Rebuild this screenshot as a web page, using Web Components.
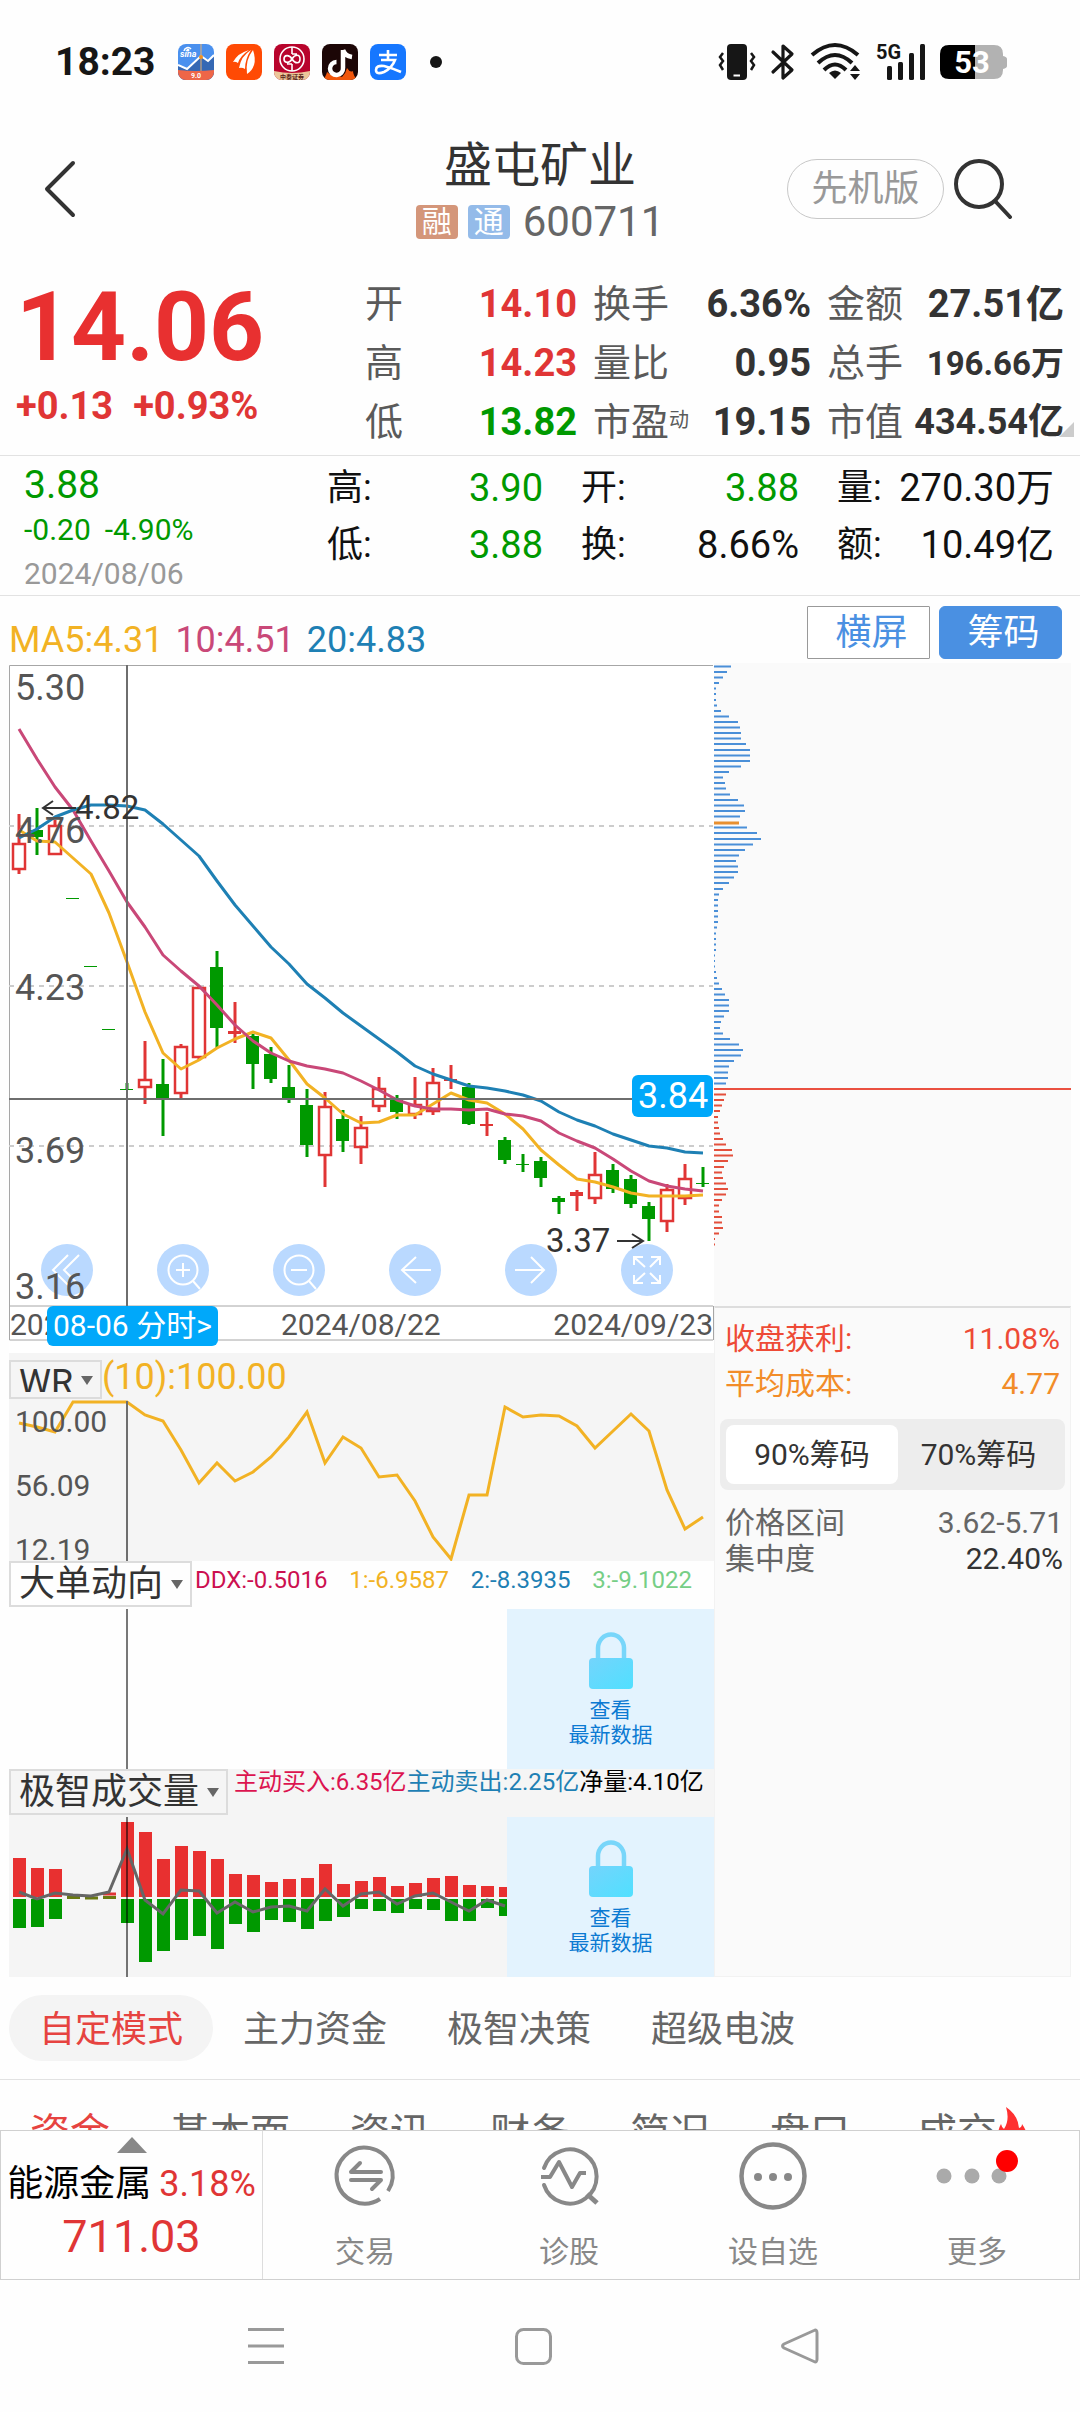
<!DOCTYPE html>
<html lang="zh-CN">
<head>
<meta charset="utf-8">
<meta name="viewport" content="width=device-width, initial-scale=1">
<title>盛屯矿业 600711</title>
<style>
  html, body { margin: 0; }
  body {
    background: #fefefe;
    color: #333;
    font-family: Roboto, "Noto Sans CJK SC", sans-serif;
    font-size: 36px;
    --red: #e03535;
    --green: #009900;
    --gray: #666;
    --rule: #e2e2e2;
  }
  .charts { display: grid; grid-template-columns: minmax(0, 705fr) minmax(0, 357fr); padding: 0 9px; }
</style>
</head>
<body>
<status-bar></status-bar>
<stock-header code="600711">盛屯矿业</stock-header>
<quote-board></quote-board>
<day-summary></day-summary>
<chart-toolbar></chart-toolbar>
<main class="charts">
  <div>
    <kline-chart></kline-chart>
    <wr-panel></wr-panel>
    <flow-panel name="大单动向" legend-line="39">
      <span slot="legend" style="color:#cc1050">DDX:-0.5016</span>
      <span slot="legend" style="color:#f2b224">1:-6.9587</span>
      <span slot="legend" style="color:#1e80b4">2:-8.3935</span>
      <span slot="legend" style="color:#76ce86">3:-9.1022</span>
    </flow-panel>
    <flow-panel name="极智成交量" legend-line="26" bars>
      <span slot="legend" style="color:#dc1450">主动买入:6.35亿</span>
      <span slot="legend" style="color:#1e80b4">主动卖出:2.25亿</span>
      <span slot="legend" style="color:#000">净量:4.10亿</span>
    </flow-panel>
  </div>
  <chip-panel></chip-panel>
</main>
<mode-tabs></mode-tabs>
<section-tabs></section-tabs>
<action-bar></action-bar>
<system-nav></system-nav>

<script>
const BASE = `
  :host { display: block; box-sizing: border-box; }
  * { box-sizing: border-box; }
  button, select { font: inherit; color: inherit; background: none; border: 0; margin: 0; padding: 0; white-space: nowrap; }
  a { color: inherit; text-decoration: none; white-space: nowrap; }
  svg { display: block; }
`;
class View extends HTMLElement {
  connectedCallback() {
    if (this.shadowRoot) return;
    this.attachShadow({ mode: 'open' }).innerHTML = `<style>${BASE}</style>` + this.render();
  }
}
const define = (name, render) => customElements.define(name, class extends View {
  render() { return render(this); }
});
const stepX = i => 19 + 18 * i;
const polyline = ys => ys.map((y, i) => `${stepX(i)},${y}`).join(' ');

/* ---------- status bar ---------- */
define('status-bar', () => `
<style>
  :host { display: flex; align-items: center; height: 124px; padding: 0 73px 0 55px; color: #161616; }
  .time { font-size: 39px; font-weight: 700; line-height: 48px; }
  .apps { display: flex; gap: 12px; margin-left: 22px; }
  .dot { width: 12px; height: 12px; border-radius: 50%; background: #161616; margin-left: 24px; }
  .sys { display: flex; align-items: center; margin-left: auto; gap: 15px; }
  .sys svg { overflow: visible; }
</style>
<span class="time">18:23</span>
<div class="apps">
  <svg width="36" height="36" viewBox="0 0 36 36"><clipPath id="c1"><rect width="36" height="36" rx="8"/></clipPath><g clip-path="url(#c1)">
    <rect width="36" height="36" fill="#4a90ee"/><path d="M0 22L8 25L22 12L30 17L36 13V36H0Z" fill="#3568b4"/><path d="M0 21L9 25L23 12L30 17L36 11" fill="none" stroke="#fff" stroke-width="2"/>
    <path d="M23 0V28" stroke="#e8b070" stroke-width="1"/><circle cx="23" cy="13" r="2" fill="#f09020"/>
    <path d="M0 26Q18 28 36 26V36H0Z" fill="#ee6648"/>
    <path d="M6 7a4 4 0 0 1 7-2" fill="none" stroke="#fff" stroke-width="1.5"/><circle cx="10" cy="6" r="1.5" fill="#fff"/>
    <text x="2" y="13" font-size="9" font-style="italic" font-weight="700" fill="#fff">sina</text>
    <text x="18" y="34" font-size="7" font-weight="700" fill="#fff" text-anchor="middle">9.0</text></g></svg>
  <svg width="36" height="36" viewBox="0 0 36 36"><rect width="36" height="36" rx="8" fill="#ff4a04"/>
    <path d="M7 18Q12 9 23 6Q14 12 12 19Q9 17 7 18Z" fill="#fff"/><path d="M13 24Q15 12 25 6Q19 15 19 25Q16 23 13 24Z" fill="#fff"/><path d="M21 30Q19 16 27 6Q30 15 28 21Q26 27 21 30Z" fill="#fff"/></svg>
  <svg width="36" height="36" viewBox="0 0 36 36"><clipPath id="c3"><rect width="36" height="36" rx="8"/></clipPath><g clip-path="url(#c3)">
    <rect width="36" height="36" fill="#b8042c"/><path d="M0 27Q18 31 36 27V36H0Z" fill="#ecc69a"/>
    <g fill="none" stroke="#fff" stroke-width="1.6"><circle cx="18" cy="15" r="12"/><path d="M18 3V10M18 20V27M18 15C15 10 10 11 10 15S15 20 18 15S26 10 26 15S21 20 18 15M18 10H23M13 20H18"/></g>
    <text x="18" y="35" font-size="6" font-weight="700" fill="#5a2418" text-anchor="middle">中泰证券</text></g></svg>
  <svg width="36" height="36" viewBox="0 0 36 36"><clipPath id="c4"><rect width="36" height="36" rx="8"/></clipPath><g clip-path="url(#c4)">
    <rect width="36" height="36" fill="#1c0606"/><path d="M0 36Q4 33 5 28Q9 32 12 30L20 33Q24 29 25 24Q28 29 31 27Q31 32 36 36Z" fill="#f0560c"/>
    <path d="M21 6V24A6.500 6.500 0 1 1 14.500 18" fill="none" stroke="#fff" stroke-width="4.500"/><path d="M21 6Q23 12 30 13" fill="none" stroke="#fff" stroke-width="4.500"/></g></svg>
  <svg width="36" height="36" viewBox="0 0 36 36"><rect width="36" height="36" rx="8" fill="#1677ff"/>
    <path d="M9 11H27M18 6V16M11 16H25Q22 24 14 28Q6 31 6 26Q6 21 14 22Q22 24 31 28" fill="none" stroke="#fff" stroke-width="2.600"/></svg>
</div>
<span class="dot"></span>
<div class="sys">
  <svg width="38" height="36" viewBox="0 0 38 36" fill="none" stroke="#161616"><rect x="9" y="0" width="20" height="36" rx="4" fill="#161616" stroke="none"/><path d="M15.500 31.500h6.500" stroke="#fff" stroke-width="2"/><path d="M5 9L2 13L5 17L2 21L5 26M33 9L36 13L33 17L36 21L33 26" stroke-width="2.500"/></svg>
  <svg width="24" height="36" viewBox="0 0 24 36" fill="none" stroke="#161616" stroke-width="3.200" stroke-linejoin="round" stroke-linecap="round"><path d="M2 8L21 26L12 34V2L21 10L2 28"/></svg>
  <svg width="52" height="38" viewBox="0 0 52 38" fill="none" stroke="#161616" stroke-width="4"><path d="M2 12Q25-8 48 12M8 20Q25 4 42 20M14 27Q25 16 36 27"/><path d="M25 36L19 30Q25 25 31 30Z" fill="#161616" stroke="none"/><path d="M45 22l5 6h-10zM45 37l5-6h-10z" fill="#161616" stroke="none"/></svg>
  <svg width="48" height="44" viewBox="0 -3 48 44" fill="#161616"><text x="-1" y="16" font-size="20" font-weight="700">5G</text><rect x="10" y="23" width="5" height="14" rx="1.500"/><rect x="21" y="19" width="5" height="18" rx="1.500"/><rect x="32" y="10" width="5" height="27" rx="1.500"/><rect x="43" y="1" width="5" height="36" rx="1.500"/></svg>
  <svg width="67" height="34" viewBox="0 0 67 34"><path d="M9 0H35V34H9Q0 34 0 25V9Q0 0 9 0Z"/><path d="M35 0H54Q63 0 63 9V11Q67 12 67 14V21Q67 23 63 24V25Q63 34 54 34H35Z" fill="#b2b2b2"/><text x="32" y="28" font-size="31" font-weight="700" fill="#fff" text-anchor="middle">53</text></svg>
</div>`);

/* ---------- header ---------- */
define('stock-header', el => `
<style>
  :host { display: grid; grid-template-columns: 1fr auto 1fr; height: 149px; }
  .back { justify-self: start; align-self: start; margin: 36px 0 0 44px; }
  .mid { padding-top: 14px; text-align: center; }
  h1 { margin: 0; font-size: 48px; font-weight: 400; line-height: 56px; }
  .code { display: flex; align-items: center; justify-content: center; gap: 10px; line-height: 55px; font-size: 42px; color: var(--gray); }
  .tag { width: 42px; height: 34px; line-height: 33px; border-radius: 4px; font-size: 30px; color: #fff; background: #d4967a; }
  .tag.b { background: #94bbe9; margin-right: 3px; }
  .acts { display: flex; align-items: flex-start; justify-content: flex-end; gap: 10px; padding: 35px 66px 0 0; }
  .pill { height: 60px; width: 157px; border: 1px solid #c8c8c8; border-radius: 30px; font-size: 36px; line-height: 54px; color: #999; }
</style>
<button class="back" aria-label="返回"><svg width="32" height="58" viewBox="0 0 32 58"><path d="M29 3L3 29L29 55" fill="none" stroke="#333" stroke-width="4" stroke-linecap="round" stroke-linejoin="round"/></svg></button>
<div class="mid"><h1><slot></slot></h1>
  <div class="code"><span class="tag">融</span><span class="tag b">通</span><span>${el.getAttribute('code')}</span></div></div>
<div class="acts"><button class="pill">先机版</button>
  <button aria-label="搜索"><svg width="60" height="60" viewBox="0 0 60 60" fill="none" stroke="#333" stroke-width="4" stroke-linecap="round"><circle cx="25" cy="25" r="23"/><path d="M42 43L56 58"/></svg></button></div>`);

/* ---------- live quote ---------- */
define('quote-board', () => `
<style>
  :host { display: grid; grid-template-columns: 333fr 212fr 218fr 237fr; column-gap: 16px; padding: 0 16px; height: 183px; border-bottom: 1px solid var(--rule); position: relative; }
  .price { color: #e83030; font-weight: 700; font-size: 96px; line-height: 108px; }
  .chg { color: var(--red); font-weight: 700; font-size: 38px; line-height: 50px; display: flex; gap: 20px; }
  dl { margin: 0; padding-top: 2px; }
  .r { display: flex; justify-content: space-between; align-items: center; height: 59px; line-height: 59px; font-size: 38px; white-space: nowrap; }
  dt { color: #5a5a5a; } dd { margin: 0; font-weight: 700; }
  .up { color: var(--red); } .dn { color: var(--green); }
  .m { font-size: 36px; } .s { font-size: 33px; }
  sup { font-size: 20px; line-height: 0; vertical-align: 8px; }
  .corner { position: absolute; right: 6px; bottom: 18px; }
</style>
<div><div class="price">14.06</div><div class="chg"><span>+0.13</span><span>+0.93%</span></div></div>
<dl><div class="r"><dt>开</dt><dd class="up">14.10</dd></div><div class="r"><dt>高</dt><dd class="up">14.23</dd></div><div class="r"><dt>低</dt><dd class="dn">13.82</dd></div></dl>
<dl><div class="r"><dt>换手</dt><dd>6.36%</dd></div><div class="r"><dt>量比</dt><dd>0.95</dd></div><div class="r"><dt>市盈<sup>动</sup></dt><dd>19.15</dd></div></dl>
<dl><div class="r"><dt>金额</dt><dd>27.51亿</dd></div><div class="r"><dt>总手</dt><dd class="s">196.66万</dd></div><div class="r"><dt>市值</dt><dd class="m">434.54亿</dd></div></dl>
<svg class="corner" width="15" height="15"><path d="M15 0V15H0Z" fill="#ccc"/></svg>`);

/* ---------- selected day ---------- */
define('day-summary', () => `
<style>
  :host { display: grid; grid-template-columns: 265fr 216fr 218fr 217fr; column-gap: 38px; padding: 0 26px 0 24px; height: 140px; border-bottom: 1px solid var(--rule); color: #111; }
  .d { padding-top: 9px; font-size: 30px; color: var(--green); }
  .d b { display: block; font-weight: 400; font-size: 39px; line-height: 40px; }
  .c { display: flex; gap: 14px; line-height: 50px; }
  time { color: #999; display: block; line-height: 38px; }
  dl { margin: 0; padding-top: 4px; }
  .r { display: flex; justify-content: space-between; line-height: 57px; white-space: nowrap; }
  dd { margin: 0; font-size: 38px; } .dn { color: var(--green); }
</style>
<div class="d"><b>3.88</b><div class="c"><span>-0.20</span><span>-4.90%</span></div><time>2024/08/06</time></div>
<dl><div class="r"><dt>高:</dt><dd class="dn">3.90</dd></div><div class="r"><dt>低:</dt><dd class="dn">3.88</dd></div></dl>
<dl><div class="r"><dt>开:</dt><dd class="dn">3.88</dd></div><div class="r"><dt>换:</dt><dd>8.66%</dd></div></dl>
<dl><div class="r"><dt>量:</dt><dd>270.30万</dd></div><div class="r"><dt>额:</dt><dd>10.49亿</dd></div></dl>`);

define('chart-toolbar', () => `
<style>
  :host { display: flex; gap: 9px; padding: 10px 18px 4px 9px; align-items: flex-end; }
  .ma { display: flex; gap: 12px; margin-right: auto; line-height: 38px; }
  button { width: 123px; height: 53px; border: 1px solid #999; color: #4a90e2; background: #fff; border-radius: 1px; padding-left: 6px; line-height: 48px; }
  .on { background: #4a90e2; color: #fff; border-color: #4a90e2; border-radius: 6px; }
</style>
<div class="ma"><span style="color:#f2b224">MA5:4.31</span><span style="color:#c94878">10:4.51</span><span style="color:#1e80b4">20:4.83</span></div>
<button>横屏</button><button class="on" aria-pressed="true">筹码</button>`);

/* ---------- candles ---------- */
/* [direction, high, body top, body bottom, low] */
const CANDLES = [
  [1,814,843,870,874],[0,808,830,837,855],[1,820,825,855,855],[0,898,898,898,898],[0,966,966,966,966],[0,1029,1029,1029,1029],
  [0,1083,1089,1089,1089],[1,1041,1079,1088,1104],[0,1059,1084,1100,1136],[1,1044,1046,1094,1100],[1,986,987,1058,1060],
  [0,951,967,1028,1048],[1,1002,1031,1034,1043],[0,1034,1036,1064,1089],[0,1047,1054,1079,1083],[0,1065,1087,1100,1103],
  [0,1089,1105,1145,1157],[1,1092,1106,1156,1187],[0,1110,1119,1141,1152],[1,1116,1127,1148,1164],[1,1077,1088,1107,1112],
  [0,1095,1098,1112,1119],[1,1077,1104,1115,1119],[1,1068,1082,1112,1115],[1,1065,1079,1081,1089],[0,1083,1087,1124,1125],
  [1,1112,1124,1126,1136],[0,1137,1140,1160,1164],[0,1154,1164,1164,1172],[0,1157,1161,1178,1187],[0,1196,1198,1202,1214],
  [1,1190,1192,1196,1211],[1,1152,1174,1199,1204],[0,1164,1170,1189,1193],[0,1175,1179,1204,1208],[0,1202,1206,1219,1241],
  [1,1184,1189,1222,1232],[1,1164,1178,1199,1205],[0,1167,1183,1183,1187]];
const MA5 = [830,841,842,858,874,913,962,1012,1053,1069,1060,1048,1039,1032,1038,1060,1084,1098,1114,1123,1122,1115,1115,1104,1093,1100,1103,1114,1129,1150,1165,1179,1182,1187,1193,1196,1196,1196,1195];
const MA10 = [729,759,787,810,841,871,902,927,955,971,986,1005,1025,1041,1053,1061,1066,1069,1073,1081,1090,1100,1106,1109,1109,1110,1109,1114,1116,1121,1133,1141,1148,1159,1171,1181,1186,1189,1191];
const MA20 = [838,829,817,810,805,805,806,810,824,840,856,881,905,926,947,964,984,998,1013,1026,1039,1052,1066,1074,1080,1086,1088,1091,1095,1101,1112,1120,1126,1134,1140,1146,1148,1152,1153];
const candle = ([up, hi, top, bot, lo], i) => {
  const x = stepX(i), c = up ? '#e03535' : '#009900';
  const wick = (a, b) => b > a ? `<path d="M${x} ${a}V${b}" stroke="${c}" stroke-width="3"/>` : '';
  if (bot - top < 5) return wick(hi, lo) + `<rect x="${x - 7}" y="${top}" width="13" height="${Math.max(1, bot - top)}" fill="${c}"/>`;
  if (up) return wick(hi, top) + wick(bot, lo) + `<rect x="${x - 6}" y="${top + 1}" width="12" height="${bot - top - 2}" fill="none" stroke="${c}" stroke-width="2.500"/>`;
  return wick(hi, lo) + `<rect x="${x - 7}" y="${top}" width="13" height="${bot - top}" fill="${c}"/>`;
};
define('kline-chart', () => `
<style>
  :host { position: relative; background: #fff; }
  .chart { position: relative; width: 100%; height: auto; pointer-events: none; }
  .tools { position: absolute; left: 32px; right: 41px; bottom: 57px; display: flex; justify-content: space-between; }
  .tools button { width: 52px; height: 52px; border-radius: 50%; background: #bad9ff; }
  .day { position: absolute; left: 38px; bottom: 7px; height: 40px; padding: 0 6px; border-radius: 6px; background: #00a8fa; color: #fff; font-size: 30px; line-height: 38px; }
  .tools svg { fill: none; stroke: #fff; stroke-width: 2; }
</style>
<div class="tools">
  <button aria-label="最早"><svg viewBox="0 0 52 52"><path d="M27 11L12 26L27 41M38 11L23 26L38 41"/></svg></button>
  <button aria-label="放大"><svg viewBox="0 0 52 52"><circle cx="26" cy="26" r="14.500"/><path d="M36 37L43 45M26 19V33M19 26H33"/></svg></button>
  <button aria-label="缩小"><svg viewBox="0 0 52 52"><circle cx="26" cy="26" r="14.500"/><path d="M36 37L43 45M18 26H34"/></svg></button>
  <button aria-label="左移"><svg viewBox="0 0 52 52"><path d="M42 26H13M27 13L13 26L27 39"/></svg></button>
  <button aria-label="右移"><svg viewBox="0 0 52 52"><path d="M10 26H39M26 13L39 26L26 39"/></svg></button>
  <button aria-label="全屏"><svg viewBox="0 0 52 52"><path d="M13 21V13H22M13 13L24 23M30 13H39V21M39 13L29 23M13 31V39H22M13 39L24 29M30 39H39V31M39 39L29 29"/></svg></button>
</div>
<svg class="chart" viewBox="9 663 705 690" fill="none">
  <path d="M9.500 1340V665.500H713M9.500 1306H713M9.500 1340H713M713.500 1306V1340" stroke="#a6a6a6"/>
  <path d="M9 826H713M9 986H713M9 1146H713" stroke="#ccc" stroke-width="2" stroke-dasharray="5 5"/>
  ${CANDLES.map(candle).join('')}
  <g stroke-width="3" stroke-linejoin="round">
    <polyline points="${polyline(MA5)}" stroke="#f2b224"/><polyline points="${polyline(MA10)}" stroke="#c94878"/><polyline points="${polyline(MA20)}" stroke="#1e80b4"/></g>
  <path d="M127 665V1306M9 1099H632" stroke="#6e6e6e" stroke-width="2"/>
  <g fill="#555" font-size="36"><text x="15" y="700">5.30</text><text x="15" y="843">4.76</text><text x="15" y="1000">4.23</text><text x="15" y="1163">3.69</text><text x="15" y="1299">3.16</text></g>
  <g fill="#333" font-size="33"><text x="75" y="819">4.82</text><text x="546" y="1252">3.37</text></g>
  <path d="M76 808H44M53 801L43 808L53 815M617 1241H642M632 1234L643 1241L632 1248" stroke="#333" stroke-width="2"/>
  <rect x="632" y="1075" width="81" height="42" rx="6" fill="#00a8fa"/><text x="638" y="1108" font-size="36" fill="#fff">3.84</text>
  <g fill="#555" font-size="30"><text x="10" y="1335">2024/07/29</text><text x="281" y="1335">2024/08/22</text><text x="713" y="1335" text-anchor="end">2024/09/23</text></g>
</svg>
<button class="day">08-06 分时&gt;</button>`);

/* ---------- indicator panels ---------- */
const PICKER = `
  .bar { display: flex; align-items: flex-start; }
  .pick { position: relative; flex: none; }
  select { appearance: none; display: block; border: 2px solid #dcdcdc; padding: 0 26px 0 8px; color: #333; }
  .pick i { position: absolute; right: 9px; top: 50%; margin-top: -4px; border: 6px solid transparent; border-top: 9px solid #666; border-bottom: 0; pointer-events: none; }
`;
const WR = [1423,1427,1432,1402,1402,1402,1402,1415,1421,1450,1483,1463,1481,1472,1457,1437,1412,1463,1437,1448,1477,1475,1501,1537,1559,1495,1495,1407,1417,1415,1416,1426,1448,1431,1414,1431,1490,1529,1517];
define('wr-panel', () => `
<style>${PICKER}
  :host { background: #f5f5f5; }
  .bar { padding-top: 7px; height: 46px; }
  select { height: 39px; padding-bottom: 5px; }
  output { color: #f2b224; line-height: 34px; }
  .plot { width: 100%; height: auto; }
</style>
<div class="bar"><div class="pick"><select aria-label="副图指标"><option>WR</option></select><i></i></div><output>(10):100.00</output></div>
<svg class="plot" viewBox="9 1399 705 162" fill="none">
  <polyline points="${polyline(WR)}" stroke="#f2b224" stroke-width="3"/>
  <path d="M127 1401V1561" stroke="#6e6e6e" stroke-width="2"/>
  <g fill="#555" font-size="30"><text x="15" y="1432">100.00</text><text x="15" y="1496">56.09</text><text x="15" y="1560">12.19</text></g>
</svg>`);

const BUY = [39,29,28,0,0,0,75,65,38,51,46,38,23,22,15,18,19,33,13,16,20,11,14,19,21,12,11,10];
const SELL = [29,28,20,0,0,0,24,63,52,41,37,50,25,33,21,23,30,22,18,10,12,14,10,11,22,22,9,17];
const NET = [1892,1899,1893,1895,1896,1892,1849,1900,1914,1890,1891,1913,1902,1912,1907,1906,1911,1889,1906,1894,1892,1904,1896,1893,1902,1911,1900,1906];
const volume = () => BUY.map((b, i) => `<rect x="${stepX(i) - 6}" y="${1897 - b}" width="13" height="${b}" fill="#e83030"/><rect x="${stepX(i) - 6}" y="1899" width="13" height="${SELL[i]}" fill="#009900"/>`).join('')
  + `<path d="M67 1897.500H80M85 1898H98M103 1897.500H116" stroke="#6a7a10" stroke-width="3"/><path d="M103 1894H116" stroke="#e03535" stroke-width="3"/>`;
define('flow-panel', el => {
  const bars = el.hasAttribute('bars');
  return `
<style>${PICKER}
  :host { background: ${bars ? '#f5f5f5' : '#fefefe'}; }
  .bar { height: 48px; }
  select { height: 46px; }
  .legend { flex: 1; min-width: 0; display: flex; justify-content: ${bars ? 'flex-start' : 'space-between'}; padding: ${bars ? '0 0 0 6px' : '0 22px 0 3px'}; font-size: 24px; line-height: ${el.getAttribute('legend-line')}px; white-space: nowrap; }
  .body { display: grid; grid-template-columns: minmax(0, 498fr) minmax(0, 207fr); }
  .plot { width: 100%; height: auto; }
  .lock { background: #e3f3fe; color: #0c7ad2; font-size: 21px; line-height: 25px; display: flex; flex-direction: column; align-items: center; padding-top: 23px; }
  .lock svg { margin-bottom: 9px; }
</style>
<div class="bar"><div class="pick"><select aria-label="副图指标"><option>${el.getAttribute('name')}</option></select><i></i></div><div class="legend"><slot name="legend"></slot></div></div>
<div class="body">
  <svg class="plot" viewBox="9 1817 498 160" fill="none">${bars ? volume() : ''}
    ${bars ? `<polyline points="${polyline(NET)}" stroke="#666" stroke-width="3"/>` : ''}
    <path d="M127 1817V1977" stroke="#000" stroke-opacity=".53" stroke-width="2"/></svg>
  <button class="lock"><svg width="44" height="57" viewBox="0 0 44 57"><defs><linearGradient id="g" x1="0" y1="0" x2="1" y2="1"><stop offset="0" stop-color="#74d4fc"/><stop offset="1" stop-color="#50e0ff"/></linearGradient></defs><path d="M9 28V16A13 13.500 0 0 1 35 16V28" fill="none" stroke="#78d6fa" stroke-width="4.500"/><rect y="26" width="44" height="31" rx="4" fill="url(#g)"/></svg><span>查看</span><span>最新数据</span></button>
</div>`;
});

/* ---------- chip distribution ---------- */
const CHIPS = [51,38,26,15,6,5,6,9,20,45,71,77,81,82,95,107,107,109,80,44,28,32,35,49,72,89,94,77,0,100,129,140,117,94,74,65,71,73,59,44,27,14,12,11,12,11,11,10,7,6,5,5,4,3,3,6,9,14,23,32,44,45,44,31,21,19,27,47,74,88,81,59,44,42,41,36,0,35,29,23,17,12,12,14,18,27,35,54,57,42,29,24,27,35,42,35,24,15,14,23,24,27,15,4,3];
const chipRow = (w, i) => w ? `<path d="M714 ${Math.round((666.4 + i * 5.56) * 2) / 2}h${Math.round(w / 3)}" stroke="${i < 76 ? '#4a8fd8' : '#e4503c'}"/>` : '';
define('chip-panel', () => `
<style>
  :host { display: flex; flex-direction: column; background: #fafafa; }
  .dist { width: 100%; height: auto; }
  .info { flex: 1; border: 1px solid #f2f2f2; border-top: 2px solid #ddd; padding: 8px 5px 0 5px; font-size: 30px; }
  dl { margin: 0; padding: 0 5px; color: var(--gray); }
  dl div { display: flex; justify-content: space-between; line-height: 45px; }
  dd { margin: 0; }
  .range { padding-right: 2px; } .range div { line-height: 36px; }
  .range .k { color: #333; }
  fieldset { display: flex; height: 71px; margin: 13px 0 15px; padding: 6px; border: 0; border-radius: 8px; background: #ededed; color: #333; line-height: 56px; }
  label { flex: 161 1 0; display: flex; align-items: center; justify-content: center; border-radius: 8px; white-space: nowrap; }
  input { position: absolute; opacity: 0; width: 1px; height: 1px; margin: 0; }
  label:has(:checked) { flex-grow: 172; background: #fff; }
</style>
<svg class="dist" viewBox="714 663 357 643" fill="none" stroke-width="2">${CHIPS.map(chipRow).join('')}
  <path d="M714 823h25" stroke="#e89030" stroke-width="3"/><path d="M714 1089H1071" stroke="#ea5040"/></svg>
<div class="info">
  <dl><div style="color:#ee4a36"><dt>收盘获利:</dt><dd>11.08%</dd></div><div style="color:#f28c28"><dt>平均成本:</dt><dd>4.77</dd></div></dl>
  <fieldset><label><input type="radio" name="chip" checked>90%筹码</label><label><input type="radio" name="chip">70%筹码</label></fieldset>
  <dl class="range"><div><dt>价格区间</dt><dd>3.62-5.71</dd></div><div><dt>集中度</dt><dd class="k">22.40%</dd></div></dl>
</div>`);

/* ---------- tabs and bars ---------- */
define('mode-tabs', () => `
<style>
  :host { display: flex; padding: 18px 9px; border-bottom: 1px solid var(--rule); color: var(--gray); }
  button { width: 204px; height: 66px; line-height: 66px; padding-top: 2px; border-radius: 33px; }
  .on { background: #f4f4f4; color: #e64340; }
</style>
<button class="on" aria-pressed="true">自定模式</button><button>主力资金</button><button>极智决策</button><button>超级电波</button>`);

define('section-tabs', () => `
<style>
  nav { display: flex; gap: 60px; height: 50px; padding: 26px 0 0 30px; overflow: hidden; font-size: 40px; line-height: 56px; color: var(--gray); }
  .on { color: #e64340; }
  .hot { display: flex; gap: 1px; padding-left: 7px; }
</style>
<nav><a class="on" href="#fund">资金</a><a href="#basic">基本面</a><a href="#news">资讯</a><a href="#finance">财务</a><a href="#brief">简况</a><a href="#board">盘口</a><a class="hot" href="#deal">成交<svg width="30" height="44" viewBox="0 0 30 44"><path d="M8 1Q20 9 21 22Q24 21 24 18Q29 25 29 31Q29 43 15 43Q0 43 0 30Q0 23 3 18Q4 22 6 23Q12 14 8 1Z" fill="#fe3030"/></svg></a></nav>`);

define('action-bar', () => `
<style>
  :host { display: grid; grid-template-columns: 262fr repeat(4, 204fr); border: 1px solid #d0d0d0; height: 150px; background: #fefefe; color: #888; }
  .sector { border-right: 1px solid #ddd; text-align: center; color: var(--red); display: flex; flex-direction: column; align-items: center; padding: 6px 4px 0; white-space: nowrap; overflow: hidden; }
  .sector p { margin: 8px 0 0; line-height: 46px; display: flex; gap: 8px; }
  .sector b { font-weight: 400; color: #000; }
  .sector strong { font-weight: 400; font-size: 45px; line-height: 60px; }
  button { display: flex; flex-direction: column; align-items: center; font-size: 30px; line-height: 40px; padding-top: 9px; }
  button svg { margin-bottom: 20px; }
</style>
<a class="sector" href="#sector"><svg width="30" height="16"><path d="M15 0L30 16H0Z" fill="#888"/></svg><p><b>能源金属</b><span>3.18%</span></p><strong>711.03</strong></a>
<button><svg width="72" height="72" viewBox="0 0 72 72" fill="none" stroke="#888" stroke-width="4"><path d="M59 51A28 28 0 1 0 51 59"/><path d="M52 32H22L31 23M22 40H52L43 49" stroke-linejoin="round" stroke-linecap="round"/></svg><span>交易</span></button>
<button><svg width="72" height="72" viewBox="0 0 72 72" fill="none" stroke="#888" stroke-width="4"><path d="M11 28A27 27 0 1 1 11 45" stroke-linecap="round"/><path d="M8 37H17L26 22L39 47L47 33H53" stroke-linejoin="round"/><path d="M54 54L64 63" stroke-width="5"/></svg><span>诊股</span></button>
<button><svg width="72" height="72" viewBox="0 0 72 72"><circle cx="36" cy="36" r="31.500" fill="none" stroke="#888" stroke-width="4.500"/><g fill="#888"><circle cx="21" cy="37" r="4"/><circle cx="36" cy="37" r="4"/><circle cx="51" cy="37" r="4"/></g></svg><span>设自选</span></button>
<button><svg width="82" height="72" viewBox="0 0 82 72"><g fill="#aaa"><circle cx="8" cy="36" r="7.500"/><circle cx="36" cy="36" r="7.500"/><circle cx="63" cy="36" r="7.500"/></g><circle cx="71" cy="21" r="11" fill="#f00"/></svg><span>更多</span></button>`);

define('system-nav', () => `
<style>
  :host { display: grid; grid-template-columns: repeat(3, 1fr); padding: 46px 147px 46px 133px; justify-items: center; }
  svg { fill: none; stroke: #999; stroke-width: 3; }
</style>
<button aria-label="最近任务"><svg width="40" height="40" viewBox="0 0 40 40"><path d="M2 3.500H38M2 20H38M2 36.500H38"/></svg></button>
<button aria-label="主页"><svg width="40" height="40" viewBox="0 0 40 40"><rect x="3.500" y="3.500" width="34" height="34" rx="7"/></svg></button>
<button aria-label="返回"><svg width="40" height="40" viewBox="0 0 40 40"><path d="M34 4.500Q37 3 37 7V33Q37 37 34 35.500L4 22Q1 20 4 18Z" stroke-linejoin="round"/></svg></button>`);
</script>
</body>
</html>
